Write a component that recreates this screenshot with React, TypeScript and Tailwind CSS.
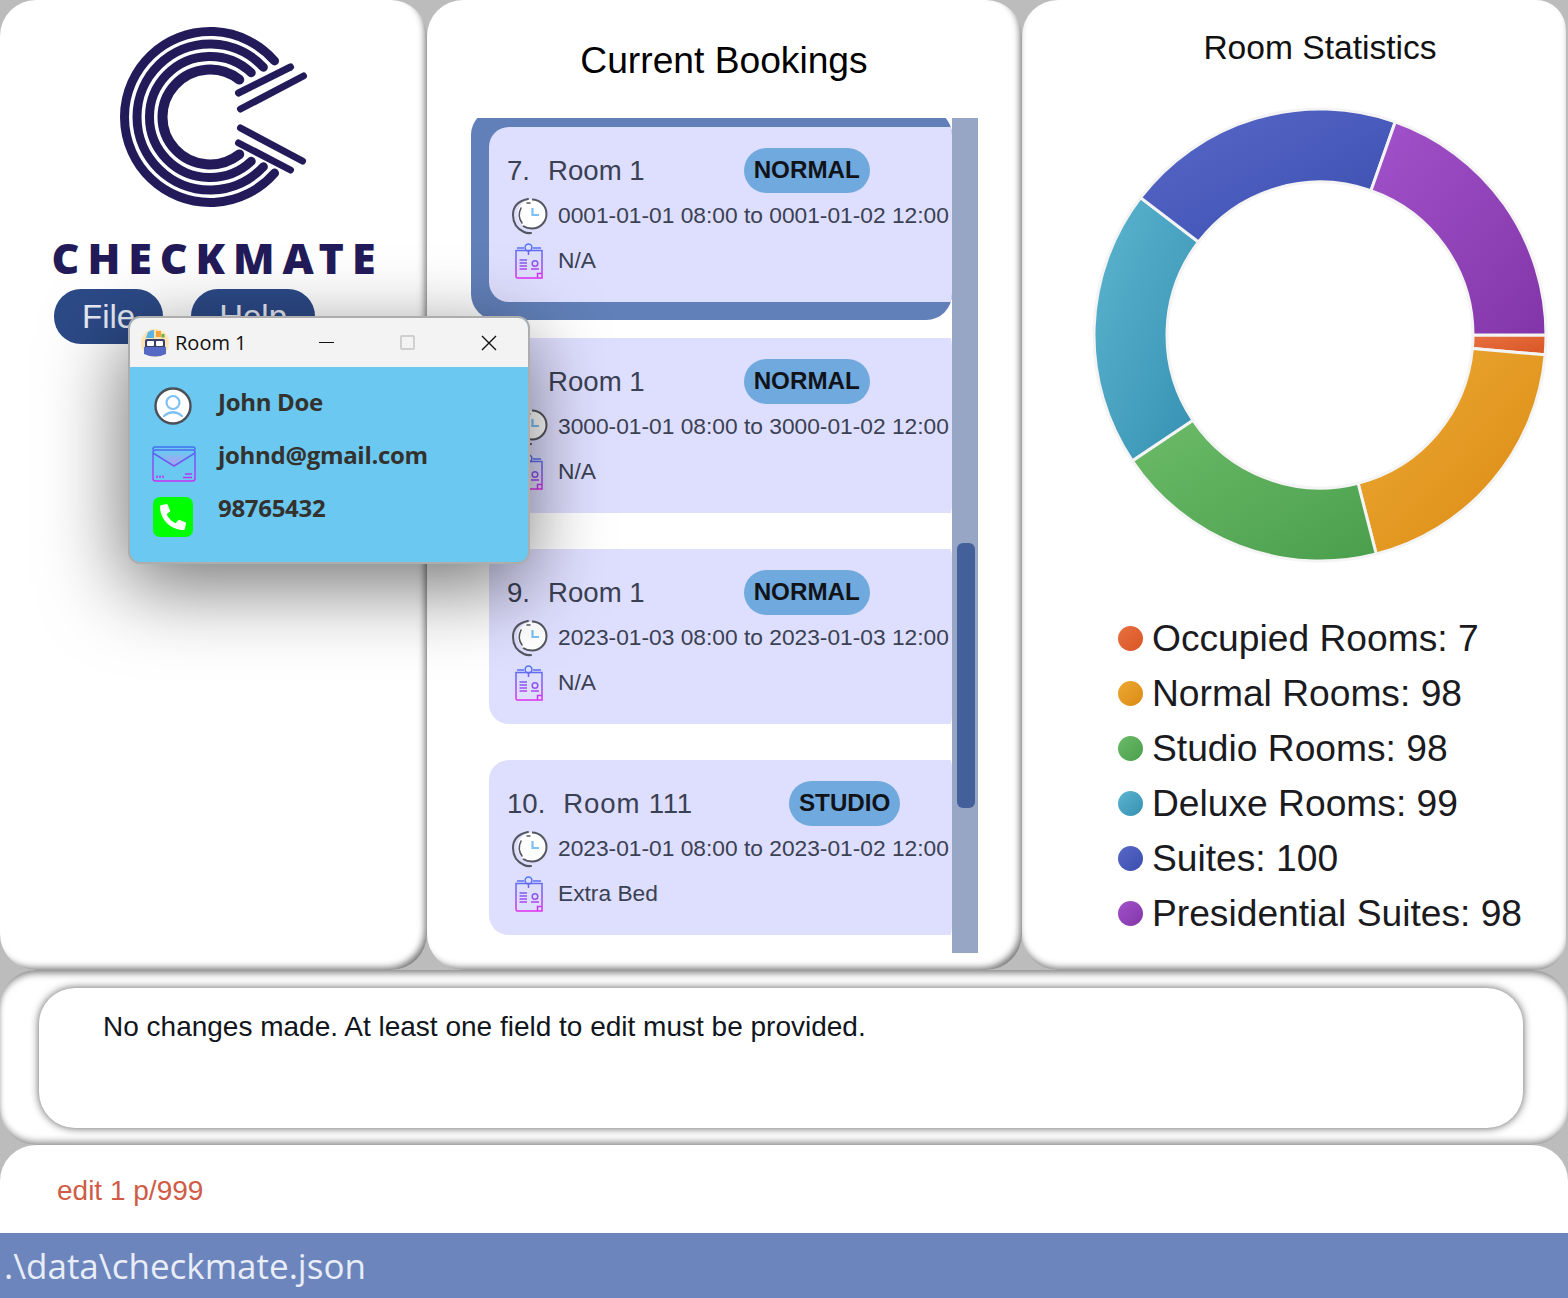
import { FaPhoneAlt } from "react-icons/fa";

const bookings = [
  { id: "7.", room: "Room 1", type: "NORMAL", dates: "0001-01-01 08:00 to 0001-01-02 12:00", note: "N/A", selected: true },
  { id: "8.", room: "Room 1", type: "NORMAL", dates: "3000-01-01 08:00 to 3000-01-02 12:00", note: "N/A" },
  { id: "9.", room: "Room 1", type: "NORMAL", dates: "2023-01-03 08:00 to 2023-01-03 12:00", note: "N/A" },
  { id: "10.", room: "Room 111", type: "STUDIO", dates: "2023-01-01 08:00 to 2023-01-02 12:00", note: "Extra Bed" },
];

const slices = [
  { label: "Occupied Rooms", value: 7, from: "#e8703f", to: "#d95525" },
  { label: "Normal Rooms", value: 98, from: "#ebaa35", to: "#dc8a12" },
  { label: "Studio Rooms", value: 98, from: "#6cbb69", to: "#4a9f4c" },
  { label: "Deluxe Rooms", value: 99, from: "#5cb6d0", to: "#358fb1" },
  { label: "Suites", value: 100, from: "#5868c9", to: "#3a4eae" },
  { label: "Presidential Suites", value: 98, from: "#a252ca", to: "#8235a8" },
];

function slicePath(start: number, end: number) {
  const cx = 230;
  const cy = 230;
  const R = 226;
  const r = 153;
  const pt = (rad: number, deg: number) => {
    const a = (deg * Math.PI) / 180;
    return `${cx + rad * Math.cos(a)} ${cy + rad * Math.sin(a)}`;
  };
  return `M${pt(R, start)} A${R} ${R} 0 0 1 ${pt(R, end)} L${pt(r, end)} A${r} ${r} 0 0 0 ${pt(r, start)} Z`;
}

function Donut() {
  const total = slices.reduce((s, x) => s + x.value, 0);
  let angle = 0;
  return (
    <svg width="460" height="460" viewBox="0 0 460 460" className="shrink-0">
      <defs>
        {slices.map((s, i) => (
          <linearGradient key={s.label} id={`slice${i}`} x1="0" y1="0" x2="1" y2="1">
            <stop offset="0" stopColor={s.from} />
            <stop offset="1" stopColor={s.to} />
          </linearGradient>
        ))}
      </defs>
      {slices.map((s, i) => {
        const start = angle;
        angle += (s.value / total) * 360;
        return <path key={s.label} d={slicePath(start, angle)} fill={`url(#slice${i})`} stroke="#f4f4f4" strokeWidth="3" />;
      })}
    </svg>
  );
}

function Logo() {
  // rings are cut open on the right, each one a bit earlier than the one outside it
  const arc = (r: number, deg: number) => {
    const a = (deg * Math.PI) / 180;
    const x = 209.5 + r * Math.cos(a);
    const dy = r * Math.sin(a);
    return `M${x} ${117 - dy} A${r} ${r} 0 1 0 ${x} ${117 + dy}`;
  };
  return (
    <svg width="190" height="184" viewBox="118.5 25 190 184" className="shrink-0">
      <g fill="none" stroke="#231b59" strokeLinecap="round">
        <path d={arc(85.5, 41)} strokeWidth="9" />
        <path d={arc(73, 43)} strokeWidth="9" />
        <path d={arc(60.5, 47)} strokeWidth="9" />
        <path d={arc(47.5, 52)} strokeWidth="10" />
        <path d="M238 93 L290 67" strokeWidth="7" />
        <path d="M240 109 L303 76" strokeWidth="7" />
        <path d="M240 128 L302 161" strokeWidth="7" />
        <path d="M238 143 L290 170" strokeWidth="7" />
      </g>
    </svg>
  );
}

function ClockIcon() {
  return (
    <svg width="36" height="38" viewBox="0 0 36 38" className="shrink-0">
      <circle cx="20" cy="17" r="14.5" fill="#ffffff" />
      <path d="M20 2.5 A14.5 14.5 0 0 1 20 31.5 Q15 31.5 11 29" fill="none" stroke="#54575f" strokeWidth="2" />
      <path d="M16 2 Q1 5 1 18 Q1 30 12 35 Q15 36.5 19 36" fill="none" stroke="#54575f" strokeWidth="2" strokeLinecap="round" />
      <path d="M9 11 Q5 19 10 26" fill="none" stroke="#54575f" strokeWidth="1.6" strokeLinecap="round" />
      <path d="M15 6 H18" stroke="#54575f" strokeWidth="1.5" strokeLinecap="round" />
      <path d="M20.5 11 V18 H27" fill="none" stroke="#7cc0f5" strokeWidth="2.2" />
    </svg>
  );
}

function NoteIcon() {
  return (
    <svg width="28" height="36" viewBox="0 0 28 36" className="shrink-0">
      <defs>
        <linearGradient id="noteGrad" gradientUnits="userSpaceOnUse" x1="0" y1="0" x2="0" y2="36">
          <stop offset="0" stopColor="#4b7bf5" />
          <stop offset="0.55" stopColor="#8a55f0" />
          <stop offset="1" stopColor="#e32cf0" />
        </linearGradient>
      </defs>
      <g fill="none" stroke="url(#noteGrad)" strokeWidth="1.5">
        <path d="M1 7.5 H27 V35 H2.5 Q1 35 1 33.5 Z" />
        <path d="M2 5 H9 M18 5 H26" />
        <circle cx="13.5" cy="4.5" r="3.4" />
        <circle cx="20" cy="20.5" r="2.8" />
        <path d="M13.5 8 V12 M4.5 17 H12 M4.5 20 H12 M4.5 23 H12 M4.5 26 H12 M16 26 H24 M22.5 35 V30.5 H27" />
      </g>
    </svg>
  );
}

function PersonIcon() {
  return (
    <svg width="38" height="38" viewBox="0 0 38 38" className="shrink-0">
      <circle cx="19" cy="19" r="17.5" fill="#ffffff" stroke="#4a4f58" strokeWidth="2.4" />
      <circle cx="19" cy="15.5" r="6.5" fill="none" stroke="#7cc0f5" strokeWidth="2.2" />
      <path d="M10 29 Q19 21.5 28 29" fill="none" stroke="#7cc0f5" strokeWidth="2.2" strokeLinecap="round" />
    </svg>
  );
}

function MailIcon() {
  return (
    <svg width="44" height="36" viewBox="0 0 44 36" className="shrink-0">
      <defs>
        <linearGradient id="mailGrad" gradientUnits="userSpaceOnUse" x1="0" y1="0" x2="0" y2="36">
          <stop offset="0" stopColor="#3d74f0" />
          <stop offset="1" stopColor="#cc2cf5" />
        </linearGradient>
        <linearGradient id="mailFill" x1="0" y1="0" x2="0" y2="1">
          <stop offset="0" stopColor="#6bc8f0" />
          <stop offset="1" stopColor="#b79af2" />
        </linearGradient>
      </defs>
      <path d="M4 6 H40 L22 18 Z" fill="url(#mailFill)" />
      <g fill="none" stroke="url(#mailGrad)" strokeWidth="1.5">
        <rect x="1" y="4" width="42" height="31" rx="2.5" />
        <path d="M1 4 V3 Q1 1 3 1 H41 Q43 1 43 3 V4 M1 7 L22 20 L43 7" />
        <path d="M5 29.5 V32 M8 29.5 V32 M11 29.5 V32 M33 28 H40 M31 31.5 H40" />
      </g>
    </svg>
  );
}

function BedIcon() {
  return (
    <svg width="28" height="28" viewBox="0 0 28 28" className="shrink-0">
      <circle cx="14" cy="14" r="14" fill="#fbe3b4" />
      <path d="M5 9 L7 3 Q10 1 13 1 V9 Z" fill="#58b3e8" />
      <rect x="15" y="2" width="5" height="6" fill="#f2a33a" />
      <rect x="20.5" y="5" width="3" height="3.5" fill="#6ab04c" />
      <path d="M4 21 V12 Q4 10 6 10 H22 Q24 10 24 12 V21 Z" fill="#3b3f6b" />
      <rect x="6" y="12" width="7" height="5" rx="1" fill="#ffffff" />
      <rect x="15" y="12" width="7" height="5" rx="1" fill="#ffffff" />
      <path d="M3 18 H25 V25 Q14 30 3 25 Z" fill="#5468c4" />
    </svg>
  );
}

function BookingRow({ b }: { b: (typeof bookings)[number] }) {
  const studio = b.type === "STUDIO";
  return (
    <div className={`shrink-0 h-[211px] py-[18px] pl-[18px] overflow-hidden rounded-[26px] ${b.selected ? "bg-[#617fb8]" : ""}`}>
      <div className="h-[175px] w-[480px] bg-[#dedefe] rounded-[20px] pl-[18px] pt-[21px] text-[#3a4153]">
        <div className="flex items-center h-[45px]">
          <span className="text-[27.6px] mr-[18px]">{b.id}</span>
          <span className={`text-[27.6px] ${studio ? "mr-[96px] tracking-[0.8px]" : "mr-[99px]"}`}>{b.room}</span>
          <span className="h-[45px] px-[10px] flex items-center rounded-full bg-[#6fa9de] text-[24.2px] font-bold text-[#111318]">{b.type}</span>
        </div>
        <div className="flex items-center h-[45px] text-[22.75px] whitespace-nowrap">
          <div className="w-[51px] pl-[5px] shrink-0"><ClockIcon /></div>
          {b.dates}
        </div>
        <div className="flex items-center h-[45px] text-[22.75px]">
          <div className="w-[51px] pl-[8px] shrink-0"><NoteIcon /></div>
          {b.note}
        </div>
      </div>
    </div>
  );
}

export default function App() {
  return (
    <div className="relative w-[1568px] h-[1298px] overflow-hidden bg-[#bcbcbc] flex flex-col font-['Liberation_Sans',Arial,sans-serif]">
      <div className="flex h-[970px] shrink-0">
        <div className="w-[427px] shrink-0 rounded-[36px] bg-white flex flex-col items-center shadow-[inset_-5px_-5px_7px_-3px_rgba(0,0,0,0.55)]">
          <div className="mt-[25px]"><Logo /></div>
          <div className="mt-[27px] ml-[8px] text-[43px] leading-[44px] font-black tracking-[7.9px] text-[#231b59] font-['Noto_Sans',sans-serif] whitespace-nowrap">CHECKMATE</div>
          <div className="self-start flex gap-[28px] ml-[54px] mt-[9px]">
            <div className="h-[55px] px-[28px] rounded-[27px] bg-[#2c4a87] text-[33px] leading-[55px] text-[#e8ecf5]">File</div>
            <div className="h-[55px] px-[28px] rounded-[27px] bg-[#2c4a87] text-[33px] leading-[55px] text-[#e8ecf5]">Help</div>
          </div>
        </div>

        <div className="w-[595px] shrink-0 rounded-[36px] bg-white flex flex-col pl-[44px] shadow-[inset_-5px_-5px_7px_-3px_rgba(0,0,0,0.55)]">
          <div className="w-[506px] mt-[39px] mb-[37px] text-center text-[37.2px] leading-[42px] text-black">Current Bookings</div>
          <div className="flex h-[835px] w-[507px]">
            <div className="w-[481px] h-full overflow-hidden flex flex-col shrink-0">
              <div className="-mt-[9px] flex flex-col">
                {bookings.map((b) => <BookingRow key={b.id} b={b} />)}
              </div>
            </div>
            <div className="w-[26px] h-full bg-[#98a6c6] pl-[5px] pr-[3px] pt-[425px]">
              <div className="h-[265px] rounded-[6px] bg-[#44609b]" />
            </div>
          </div>
        </div>

        <div className="flex-1 rounded-[36px] rounded-r-[30px] bg-white flex flex-col items-center pl-[52px] mr-[2px] shadow-[inset_0_-5px_7px_-3px_rgba(0,0,0,0.55)]">
          <div className="mt-[28px] mb-[37px] text-[33.6px] leading-[40px] text-[#111]">Room Statistics</div>
          <Donut />
          <div className="self-start ml-[44px] mt-[46px] flex flex-col">
            {slices.map((s) => (
              <div key={s.label} className="flex items-center h-[55px] text-[37.2px] text-[#1b1b1f] whitespace-nowrap">
                <span className="w-[25px] h-[25px] rounded-full mr-[9px] shrink-0" style={{ backgroundImage: `linear-gradient(135deg, ${s.from}, ${s.to})` }} />
                {s.label}: {s.value}
              </div>
            ))}
          </div>
        </div>
      </div>

      <div className="h-[175px] shrink-0 rounded-[36px] bg-white pl-[39px] pr-[45px] pt-[18px] shadow-[inset_0_6px_7px_-3px_rgba(0,0,0,0.5),inset_0_-6px_7px_-3px_rgba(0,0,0,0.45)]">
        <div className="h-[140px] rounded-[36px] bg-white pl-[64px] pt-[23px] text-[28px] leading-[32px] text-[#11151c] shadow-[0_0_8px_rgba(0,0,0,0.65)]">
          No changes made. At least one field to edit must be provided.
        </div>
      </div>

      <div className="h-[88px] shrink-0 rounded-t-[36px] bg-white pl-[57px] pt-[30px] text-[28px] leading-[32px] text-[#cf5c46]">edit 1 p/999</div>

      <div className="h-[65px] shrink-0 bg-[#6c85bc] pl-[4px] text-[35px] leading-[66px] text-[#e8edf8] font-['Open_Sans',sans-serif]">.\data\checkmate.json</div>

      <div className="absolute left-[128px] top-[316px] w-[402px] h-[248px] rounded-[12px] border-2 border-[#adadad] overflow-hidden bg-[#6bc8f0] shadow-[-4px_22px_80px_rgba(0,0,0,0.55)]">
        <div className="h-[49px] bg-[#f3f3f3] flex items-center pl-[11px] text-[20px] text-[#111] font-['Open_Sans',sans-serif]">
          <BedIcon />
          <span className="ml-[6px] w-[144px]">Room 1</span>
          <span className="w-[15px] h-px bg-[#111]" />
          <span className="ml-[66px] w-[15px] h-[15px] rounded-[2px] border-2 border-[#cfcfcf]" />
          <svg width="16" height="16" viewBox="0 0 16 16" className="ml-[66px]">
            <path d="M1 1 L15 15 M15 1 L1 15" stroke="#111" strokeWidth="1.4" fill="none" />
          </svg>
        </div>
        <div className="pl-[22px] pt-[18px] flex flex-col text-[24px] tracking-[-0.3px] leading-[34px] font-bold text-[#33322f] font-['Open_Sans',sans-serif]">
          <div className="flex h-[53px]">
            <div className="w-[66px] pl-[2px] pt-[2px]"><PersonIcon /></div>
            <span>John Doe</span>
          </div>
          <div className="flex h-[53px]">
            <div className="w-[66px] pt-[8px]"><MailIcon /></div>
            <span>johnd@gmail.com</span>
          </div>
          <div className="flex h-[53px]">
            <div className="w-[66px] pl-[1px] pt-[6px]">
              <div className="w-[40px] h-[40px] rounded-[7px] bg-[#00ff00] flex items-center justify-center text-white"><FaPhoneAlt size={26} /></div>
            </div>
            <span>98765432</span>
          </div>
        </div>
      </div>
    </div>
  );
}
